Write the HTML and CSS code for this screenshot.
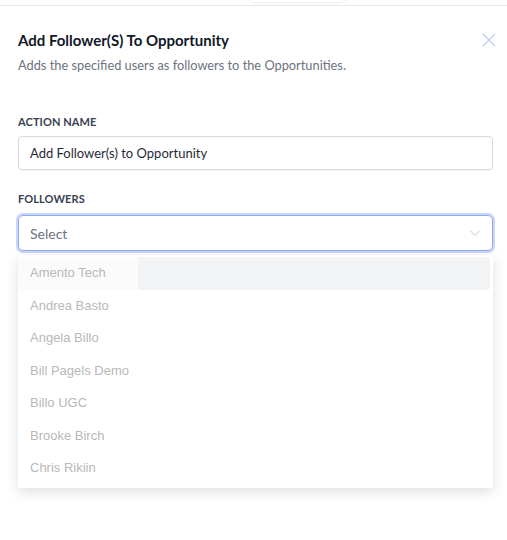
FILE: index.html
```html
<!DOCTYPE html>
<html>
<head>
<meta charset="utf-8">
<link rel="stylesheet" href="styles.css">
</head>
<body>
<div class="topbar"><div class="tab"></div></div>
<div class="panel">
  <div class="header">
    <div class="titles">
      <h1 class="title">Add Follower(S) To Opportunity</h1>
      <p class="subtitle">Adds the specified users as followers to the Opportunities.</p>
    </div>
    <svg class="close" width="14" height="14" viewBox="0 0 14 14"><path d="M1 1L13 13M13 1L1 13" stroke="#c3cdf3" stroke-width="1.4" fill="none"/></svg>
  </div>
  <div class="field">
    <label class="label">ACTION NAME</label>
    <div class="input">Add Follower(s) to Opportunity</div>
  </div>
  <div class="field field2">
    <label class="label">FOLLOWERS</label>
    <div class="select">
      <span class="placeholder">Select</span>
      <svg class="chev" width="12" height="8" viewBox="0 0 12 8"><path d="M1 1.5L6 6.5L11 1.5" stroke="#c4c8cf" stroke-width="1" fill="none"/></svg>
    </div>
    <div class="dropdown">
      <div class="item hover">Amento Tech</div>
      <div class="item">Andrea Basto</div>
      <div class="item">Angela Billo</div>
      <div class="item">Bill Pagels Demo</div>
      <div class="item">Billo UGC</div>
      <div class="item">Brooke Birch</div>
      <div class="item">Chris Rikiin</div>
    </div>
  </div>
</div>
</body>
</html>
```
FILE: styles.css
```css
html, body { margin: 0; padding: 0; background: #fff; }
body { font-family: "Lato", "Segoe UI", sans-serif; color: #111827; width: 507px; height: 540px; overflow: hidden; }
.topbar { height: 5px; border-bottom: 1px solid #e7e8eb; position: relative; }
.tab { position: absolute; left: 250px; top: -4px; width: 96px; height: 6px; border-radius: 0 0 6px 6px; box-shadow: 0 1px 3px rgba(0,0,0,0.08); background: #fff; }
.panel { padding: 0 14px 0 18px; }
.header { display: flex; justify-content: space-between; align-items: flex-start; padding-top: 21px; }
.title { margin: 0; font-size: 15px; font-weight: 700; line-height: 26px; color: #111827; }
.subtitle { margin: 3px 0 0; font-size: 12.8px; line-height: 18px; color: #6b7280; }
.close { margin-top: 6px; margin-right: -3px; }
.field { margin-top: 41px; }
.field2 { margin-top: 22px; }
.label { display: block; font-size: 11px; font-weight: 700; color: #374151; letter-spacing: 0.1px; line-height: 14px; margin-bottom: 7px; }
.field2 .label { margin-bottom: 9px; }
.input { height: 32px; border: 1px solid #d6d9de; border-radius: 4px; box-sizing: content-box; padding: 0 11px; font-size: 13px; line-height: 32px; color: #1f2937; box-shadow: 0 1px 1px rgba(0,0,0,0.04); }
.select { height: 34px; border: 1px solid #8fa8ee; border-radius: 5px; padding: 0 11px; display: flex; align-items: center; justify-content: space-between; box-shadow: 0 0 0 2px #c9d6fb; }
.placeholder { font-size: 14px; color: #6b7280; }
.dropdown { margin-top: 4px; background: #fff; box-shadow: 0 4px 14px rgba(0,0,0,0.13); border-radius: 3px; padding: 2px 3px 3px 0; }
.item { height: 32.5px; line-height: 32.5px; padding-left: 12px; font-family: "Liberation Sans", Arial, sans-serif; font-size: 13px; color: #b8b8b8; }
.item.hover { background: linear-gradient(to right, #fbfbfb 0, #fbfbfb 120px, #f2f3f5 120px); border-radius: 0 3px 3px 0; }
```
